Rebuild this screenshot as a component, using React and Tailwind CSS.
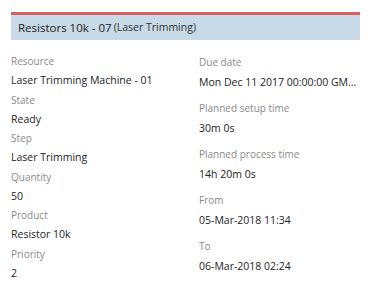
import React from "react";

const left = [
  ["Resource", "Laser Trimming Machine - 01"],
  ["State", "Ready"],
  ["Step", "Laser Trimming"],
  ["Quantity", "50"],
  ["Product", "Resistor 10k"],
  ["Priority", "2"],
];

const right = [
  ["Due date", "Mon Dec 11 2017 00:00:00 GMT+0100 (CET)"],
  ["Planned setup time", "30m 0s"],
  ["Planned process time", "14h 20m 0s"],
  ["From", "05-Mar-2018 11:34"],
  ["To", "06-Mar-2018 02:24"],
];

const App = () => {
  return (
    <div
      className="min-h-screen bg-white pt-[12px] px-[11px]"
      style={{ fontFamily: '"Open Sans", sans-serif' }}
    >
      <div className="w-[349px]">
        {/* Header */}
        <div className="border-t-[3px] border-[#d9605e] bg-[#c8d9e7] h-[28px] flex items-center pl-[7px] text-[#222]">
          <span className="text-[11.5px]">Resistors 10k - 07</span>
          <span className="text-[10.5px] ml-[2px] text-[#333]">(Laser Trimming)</span>
        </div>

        <div className="grid grid-cols-[188px_1fr] pt-[12px]">
          {/* Left column */}
          <div className="flex flex-col">
            {left.map(([label, value]) => (
              <div key={label}>
                <div className="text-[10px] leading-[18px] text-[#8a8a8a]">{label}</div>
                <div className="text-[10.5px] leading-[20.5px] text-[#222]">{value}</div>
              </div>
            ))}
          </div>

          {/* Right column */}
          <div className="flex flex-col gap-[6px] min-w-0">
            {right.map(([label, value]) => (
              <div key={label}>
                <div className="text-[10px] leading-[20px] text-[#8a8a8a]">{label}</div>
                <div className="text-[10.5px] leading-[20px] text-[#222] truncate">{value}</div>
              </div>
            ))}
          </div>
        </div>
      </div>
    </div>
  );
};

export default App;
